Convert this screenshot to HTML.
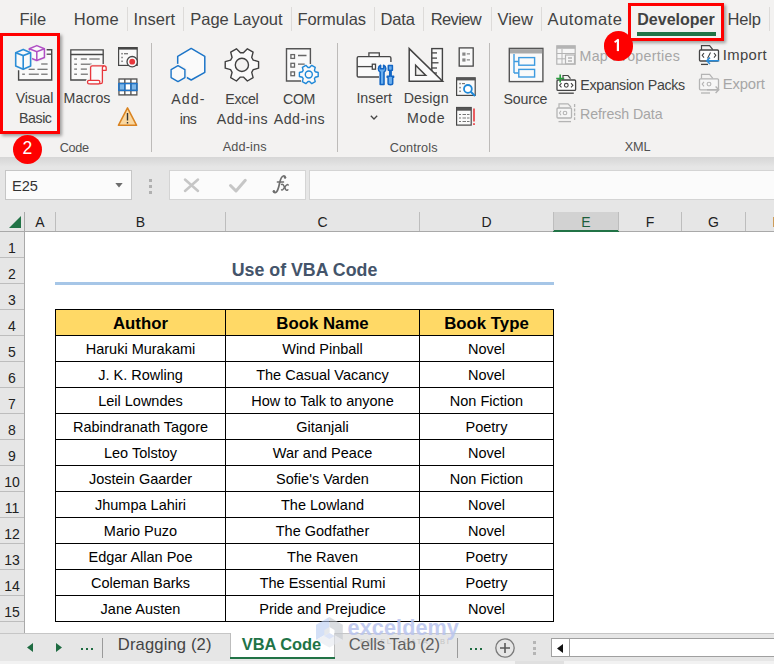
<!DOCTYPE html>
<html><head><meta charset="utf-8"><style>
html,body{margin:0;padding:0}
body{width:774px;height:664px;overflow:hidden;position:relative;background:#f3f2f1;font-family:"Liberation Sans", sans-serif}
.t{position:absolute;line-height:1;white-space:nowrap;font-family:"Liberation Sans", sans-serif}
</style></head><body>
<div class="t" style="left:19.50px;top:11.23px;font-size:16.50px;color:#424242;">File</div>
<div class="t" style="left:73.80px;top:11.23px;font-size:16.50px;color:#424242;letter-spacing:0.315px;">Home</div>
<div style="position:absolute;left:127.00px;top:7.00px;width:1.00px;height:24.00px;background:#dddbd9"></div>
<div class="t" style="left:133.50px;top:11.23px;font-size:16.50px;color:#424242;letter-spacing:0.070px;">Insert</div>
<div style="position:absolute;left:183.00px;top:7.00px;width:1.00px;height:24.00px;background:#dddbd9"></div>
<div class="t" style="left:190.30px;top:11.23px;font-size:16.50px;color:#424242;letter-spacing:-0.045px;">Page Layout</div>
<div style="position:absolute;left:291.00px;top:7.00px;width:1.00px;height:24.00px;background:#dddbd9"></div>
<div class="t" style="left:297.40px;top:11.23px;font-size:16.50px;color:#424242;letter-spacing:-0.015px;">Formulas</div>
<div style="position:absolute;left:374.00px;top:7.00px;width:1.00px;height:24.00px;background:#dddbd9"></div>
<div class="t" style="left:380.50px;top:11.23px;font-size:16.50px;color:#424242;letter-spacing:-0.133px;">Data</div>
<div style="position:absolute;left:423.00px;top:7.00px;width:1.00px;height:24.00px;background:#dddbd9"></div>
<div class="t" style="left:430.70px;top:11.23px;font-size:16.50px;color:#424242;letter-spacing:-0.624px;">Review</div>
<div style="position:absolute;left:491.00px;top:7.00px;width:1.00px;height:24.00px;background:#dddbd9"></div>
<div class="t" style="left:497.40px;top:11.23px;font-size:16.50px;color:#424242;letter-spacing:0.042px;">View</div>
<div style="position:absolute;left:541.00px;top:7.00px;width:1.00px;height:24.00px;background:#dddbd9"></div>
<div class="t" style="left:547.60px;top:11.23px;font-size:16.50px;color:#424242;letter-spacing:0.526px;">Automate</div>
<div class="t" style="left:727.60px;top:11.23px;font-size:16.50px;color:#424242;letter-spacing:-0.203px;">Help</div>
<div style="position:absolute;left:769.00px;top:7.00px;width:1.00px;height:24.00px;background:#dddbd9"></div>
<div class="t" style="left:637.30px;top:12.45px;font-size:16.00px;color:#424242;font-weight:bold;">Developer</div>
<div style="position:absolute;left:637.00px;top:32.00px;width:79.00px;height:3.50px;background:#217346"></div>
<div class="t" style="left:-265.58px;top:91.28px;font-size:14.20px;color:#424242;width:600px;text-align:center;letter-spacing:-0.162px;">Visual</div>
<div class="t" style="left:-264.73px;top:111.28px;font-size:14.20px;color:#424242;width:600px;text-align:center;letter-spacing:-0.455px;">Basic</div>
<div class="t" style="left:-212.96px;top:91.28px;font-size:14.20px;color:#424242;width:600px;text-align:center;letter-spacing:0.085px;">Macros</div>
<div class="t" style="left:-111.66px;top:91.68px;font-size:14.20px;color:#424242;width:600px;text-align:center;letter-spacing:1.079px;">Add-</div>
<div class="t" style="left:-111.92px;top:111.58px;font-size:14.20px;color:#424242;width:600px;text-align:center;letter-spacing:-0.438px;">ins</div>
<div class="t" style="left:-58.18px;top:91.68px;font-size:14.20px;color:#424242;width:600px;text-align:center;letter-spacing:-0.355px;">Excel</div>
<div class="t" style="left:-57.58px;top:111.58px;font-size:14.20px;color:#424242;width:600px;text-align:center;letter-spacing:0.444px;">Add-ins</div>
<div class="t" style="left:-1.01px;top:91.68px;font-size:14.20px;color:#424242;width:600px;text-align:center;letter-spacing:-0.428px;">COM</div>
<div class="t" style="left:-0.57px;top:111.58px;font-size:14.20px;color:#424242;width:600px;text-align:center;letter-spacing:0.460px;">Add-ins</div>
<div class="t" style="left:74.21px;top:91.38px;font-size:14.20px;color:#424242;width:600px;text-align:center;letter-spacing:0.020px;">Insert</div>
<svg style="position:absolute;left:369.50px;top:114.50px" width="8" height="5" viewBox="0 0 8 5"><path d="M0.8 0.8L4 4L7.2 0.8" fill="none" stroke="#444" stroke-width="1.3"/></svg>
<div class="t" style="left:126.18px;top:91.38px;font-size:14.20px;color:#424242;width:600px;text-align:center;letter-spacing:0.153px;">Design</div>
<div class="t" style="left:126.17px;top:111.08px;font-size:14.20px;color:#424242;width:600px;text-align:center;letter-spacing:0.733px;">Mode</div>
<div class="t" style="left:225.39px;top:91.58px;font-size:14.20px;color:#424242;width:600px;text-align:center;letter-spacing:-0.223px;">Source</div>
<div class="t" style="left:579.50px;top:49.18px;font-size:14.20px;color:#a6a6a6;letter-spacing:0.317px;">Map Properties</div>
<div class="t" style="left:580.30px;top:78.38px;font-size:14.20px;color:#424242;letter-spacing:-0.280px;">Expansion Packs</div>
<div class="t" style="left:580.00px;top:107.18px;font-size:14.20px;color:#a6a6a6;letter-spacing:-0.092px;">Refresh Data</div>
<div class="t" style="left:722.70px;top:48.37px;font-size:14.80px;color:#424242;letter-spacing:0.408px;">Import</div>
<div class="t" style="left:722.70px;top:77.47px;font-size:14.80px;color:#a6a6a6;letter-spacing:-0.114px;">Export</div>
<div class="t" style="left:-225.88px;top:141.55px;font-size:12.70px;color:#505050;width:600px;text-align:center;letter-spacing:-0.351px;">Code</div>
<div class="t" style="left:-55.32px;top:141.45px;font-size:12.70px;color:#505050;width:600px;text-align:center;letter-spacing:0.158px;">Add-ins</div>
<div class="t" style="left:113.64px;top:142.05px;font-size:12.70px;color:#505050;width:600px;text-align:center;letter-spacing:0.085px;">Controls</div>
<div class="t" style="left:337.63px;top:140.85px;font-size:12.70px;color:#505050;width:600px;text-align:center;letter-spacing:-0.149px;">XML</div>
<div style="position:absolute;left:151.00px;top:43.00px;width:1.00px;height:109.00px;background:#bdbbb9"></div>
<div style="position:absolute;left:337.00px;top:43.00px;width:1.00px;height:109.00px;background:#bdbbb9"></div>
<div style="position:absolute;left:489.00px;top:43.00px;width:1.00px;height:109.00px;background:#bdbbb9"></div>
<div style="position:absolute;left:0.00px;top:157.00px;width:774.00px;height:75.00px;background:#e6e6e6"></div>
<div style="position:absolute;left:0.00px;top:157.00px;width:774.00px;height:10.00px;background:linear-gradient(#d6d6d6,#e6e6e6)"></div>
<div style="position:absolute;left:5.00px;top:170.00px;width:127.00px;height:30.00px;background:#fbfbfb;border:1px solid #c6c6c6;box-sizing:border-box"></div>
<div class="t" style="left:12.00px;top:178.84px;font-size:14.60px;color:#333;">E25</div>
<svg style="position:absolute;left:115.00px;top:182.50px" width="8" height="5" viewBox="0 0 8 5"><path d="M0.3 0H7.7L4 4.5Z" fill="#6d6d6d"/></svg>
<div style="position:absolute;left:148.50px;top:178.50px;width:3.00px;height:3.00px;background:#b0b0b0"></div>
<div style="position:absolute;left:148.50px;top:184.50px;width:3.00px;height:3.00px;background:#b0b0b0"></div>
<div style="position:absolute;left:148.50px;top:190.50px;width:3.00px;height:3.00px;background:#b0b0b0"></div>
<div style="position:absolute;left:169.00px;top:170.00px;width:137.00px;height:30.00px;background:#fbfbfb;border:1px solid #d4d4d4;box-sizing:border-box"></div>
<div style="position:absolute;left:309.00px;top:170.00px;width:470.00px;height:30.00px;background:#fbfbfb;border:1px solid #d4d4d4;box-sizing:border-box"></div>
<div style="position:absolute;left:0.00px;top:212.00px;width:774.00px;height:19.00px;background:#e6e6e6"></div>
<div style="position:absolute;left:0.00px;top:231.00px;width:774.00px;height:1.00px;background:#a9a9a9"></div>
<div style="position:absolute;left:0.00px;top:232.00px;width:24.00px;height:402.00px;background:#e6e6e6"></div>
<div style="position:absolute;left:24.00px;top:211.50px;width:1.00px;height:422.00px;background:#a9a9a9"></div>
<div class="t" style="left:-260.00px;top:215.15px;font-size:14.00px;color:#222;width:600px;text-align:center;">A</div>
<div style="position:absolute;left:55.00px;top:212.00px;width:1.00px;height:19.00px;background:#bdbdbd"></div>
<div class="t" style="left:-159.50px;top:215.15px;font-size:14.00px;color:#222;width:600px;text-align:center;">B</div>
<div style="position:absolute;left:225.00px;top:212.00px;width:1.00px;height:19.00px;background:#bdbdbd"></div>
<div class="t" style="left:22.50px;top:215.15px;font-size:14.00px;color:#222;width:600px;text-align:center;">C</div>
<div style="position:absolute;left:419.00px;top:212.00px;width:1.00px;height:19.00px;background:#bdbdbd"></div>
<div class="t" style="left:186.50px;top:215.15px;font-size:14.00px;color:#222;width:600px;text-align:center;">D</div>
<div style="position:absolute;left:553.00px;top:212.00px;width:1.00px;height:19.00px;background:#bdbdbd"></div>
<div style="position:absolute;left:553.00px;top:212.00px;width:65.00px;height:19.00px;background:#d2d2d2"></div>
<div style="position:absolute;left:553.00px;top:230.00px;width:66.00px;height:2.00px;background:#217346"></div>
<div class="t" style="left:286.00px;top:215.15px;font-size:14.00px;color:#1d5e3b;width:600px;text-align:center;">E</div>
<div style="position:absolute;left:618.00px;top:212.00px;width:1.00px;height:19.00px;background:#bdbdbd"></div>
<div class="t" style="left:350.00px;top:215.15px;font-size:14.00px;color:#222;width:600px;text-align:center;">F</div>
<div style="position:absolute;left:681.00px;top:212.00px;width:1.00px;height:19.00px;background:#bdbdbd"></div>
<div class="t" style="left:413.50px;top:215.15px;font-size:14.00px;color:#222;width:600px;text-align:center;">G</div>
<div style="position:absolute;left:745.00px;top:212.00px;width:1.00px;height:19.00px;background:#bdbdbd"></div>
<div class="t" style="left:477.50px;top:215.15px;font-size:14.00px;color:#222;width:600px;text-align:center;">H</div>
<div style="position:absolute;left:809.00px;top:212.00px;width:1.00px;height:19.00px;background:#bdbdbd"></div>
<div style="position:absolute;left:553.00px;top:212.00px;width:1.00px;height:19.00px;background:#bdbdbd"></div>
<svg style="position:absolute;left:9.00px;top:216.00px" width="12" height="12" viewBox="0 0 12 12"><path d="M12 0V12H0Z" fill="#217346"/></svg>
<div class="t" style="left:-288.00px;top:241.15px;font-size:14.00px;color:#222;width:600px;text-align:center;">1</div>
<div style="position:absolute;left:0.00px;top:257.00px;width:24.00px;height:1.00px;background:#bdbdbd"></div>
<div class="t" style="left:-288.00px;top:267.15px;font-size:14.00px;color:#222;width:600px;text-align:center;">2</div>
<div style="position:absolute;left:0.00px;top:283.00px;width:24.00px;height:1.00px;background:#bdbdbd"></div>
<div class="t" style="left:-288.00px;top:293.15px;font-size:14.00px;color:#222;width:600px;text-align:center;">3</div>
<div style="position:absolute;left:0.00px;top:309.00px;width:24.00px;height:1.00px;background:#bdbdbd"></div>
<div class="t" style="left:-288.00px;top:319.15px;font-size:14.00px;color:#222;width:600px;text-align:center;">4</div>
<div style="position:absolute;left:0.00px;top:335.00px;width:24.00px;height:1.00px;background:#bdbdbd"></div>
<div class="t" style="left:-288.00px;top:345.15px;font-size:14.00px;color:#222;width:600px;text-align:center;">5</div>
<div style="position:absolute;left:0.00px;top:361.00px;width:24.00px;height:1.00px;background:#bdbdbd"></div>
<div class="t" style="left:-288.00px;top:371.15px;font-size:14.00px;color:#222;width:600px;text-align:center;">6</div>
<div style="position:absolute;left:0.00px;top:387.00px;width:24.00px;height:1.00px;background:#bdbdbd"></div>
<div class="t" style="left:-288.00px;top:397.15px;font-size:14.00px;color:#222;width:600px;text-align:center;">7</div>
<div style="position:absolute;left:0.00px;top:413.00px;width:24.00px;height:1.00px;background:#bdbdbd"></div>
<div class="t" style="left:-288.00px;top:423.15px;font-size:14.00px;color:#222;width:600px;text-align:center;">8</div>
<div style="position:absolute;left:0.00px;top:439.00px;width:24.00px;height:1.00px;background:#bdbdbd"></div>
<div class="t" style="left:-288.00px;top:449.15px;font-size:14.00px;color:#222;width:600px;text-align:center;">9</div>
<div style="position:absolute;left:0.00px;top:465.00px;width:24.00px;height:1.00px;background:#bdbdbd"></div>
<div class="t" style="left:-288.00px;top:475.15px;font-size:14.00px;color:#222;width:600px;text-align:center;">10</div>
<div style="position:absolute;left:0.00px;top:491.00px;width:24.00px;height:1.00px;background:#bdbdbd"></div>
<div class="t" style="left:-288.00px;top:501.15px;font-size:14.00px;color:#222;width:600px;text-align:center;">11</div>
<div style="position:absolute;left:0.00px;top:517.00px;width:24.00px;height:1.00px;background:#bdbdbd"></div>
<div class="t" style="left:-288.00px;top:527.15px;font-size:14.00px;color:#222;width:600px;text-align:center;">12</div>
<div style="position:absolute;left:0.00px;top:543.00px;width:24.00px;height:1.00px;background:#bdbdbd"></div>
<div class="t" style="left:-288.00px;top:553.15px;font-size:14.00px;color:#222;width:600px;text-align:center;">13</div>
<div style="position:absolute;left:0.00px;top:569.00px;width:24.00px;height:1.00px;background:#bdbdbd"></div>
<div class="t" style="left:-288.00px;top:579.15px;font-size:14.00px;color:#222;width:600px;text-align:center;">14</div>
<div style="position:absolute;left:0.00px;top:595.00px;width:24.00px;height:1.00px;background:#bdbdbd"></div>
<div class="t" style="left:-288.00px;top:605.15px;font-size:14.00px;color:#222;width:600px;text-align:center;">15</div>
<div style="position:absolute;left:0.00px;top:621.00px;width:24.00px;height:1.00px;background:#bdbdbd"></div>
<div style="position:absolute;left:25.00px;top:232.00px;width:774.00px;height:401.50px;background:#fff"></div>
<div class="t" style="left:4.50px;top:262.33px;font-size:17.80px;color:#44546a;font-weight:bold;width:600px;text-align:center;">Use of VBA Code</div>
<div style="position:absolute;left:55.00px;top:282.00px;width:499.00px;height:3.00px;background:#a6c6e7"></div>
<div style="position:absolute;left:55.00px;top:309.00px;width:499.00px;height:26.00px;background:#ffd966"></div>
<div class="t" style="left:-159.50px;top:315.98px;font-size:16.80px;color:#000;font-weight:bold;width:600px;text-align:center;">Author</div>
<div class="t" style="left:22.50px;top:315.98px;font-size:16.80px;color:#000;font-weight:bold;width:600px;text-align:center;">Book Name</div>
<div class="t" style="left:186.50px;top:315.98px;font-size:16.80px;color:#000;font-weight:bold;width:600px;text-align:center;">Book Type</div>
<div class="t" style="left:-159.50px;top:342.32px;font-size:14.50px;color:#000;width:600px;text-align:center;">Haruki Murakami</div>
<div class="t" style="left:22.50px;top:342.32px;font-size:14.50px;color:#000;width:600px;text-align:center;">Wind Pinball</div>
<div class="t" style="left:186.50px;top:342.32px;font-size:14.50px;color:#000;width:600px;text-align:center;">Novel</div>
<div class="t" style="left:-159.50px;top:368.32px;font-size:14.50px;color:#000;width:600px;text-align:center;">J. K. Rowling</div>
<div class="t" style="left:22.50px;top:368.32px;font-size:14.50px;color:#000;width:600px;text-align:center;">The Casual Vacancy</div>
<div class="t" style="left:186.50px;top:368.32px;font-size:14.50px;color:#000;width:600px;text-align:center;">Novel</div>
<div class="t" style="left:-159.50px;top:394.32px;font-size:14.50px;color:#000;width:600px;text-align:center;">Leil Lowndes</div>
<div class="t" style="left:22.50px;top:394.32px;font-size:14.50px;color:#000;width:600px;text-align:center;">How to Talk to anyone</div>
<div class="t" style="left:186.50px;top:394.32px;font-size:14.50px;color:#000;width:600px;text-align:center;">Non Fiction</div>
<div class="t" style="left:-159.50px;top:420.32px;font-size:14.50px;color:#000;width:600px;text-align:center;">Rabindranath Tagore</div>
<div class="t" style="left:22.50px;top:420.32px;font-size:14.50px;color:#000;width:600px;text-align:center;">Gitanjali</div>
<div class="t" style="left:186.50px;top:420.32px;font-size:14.50px;color:#000;width:600px;text-align:center;">Poetry</div>
<div class="t" style="left:-159.50px;top:446.32px;font-size:14.50px;color:#000;width:600px;text-align:center;">Leo Tolstoy</div>
<div class="t" style="left:22.50px;top:446.32px;font-size:14.50px;color:#000;width:600px;text-align:center;">War and Peace</div>
<div class="t" style="left:186.50px;top:446.32px;font-size:14.50px;color:#000;width:600px;text-align:center;">Novel</div>
<div class="t" style="left:-159.50px;top:472.32px;font-size:14.50px;color:#000;width:600px;text-align:center;">Jostein Gaarder</div>
<div class="t" style="left:22.50px;top:472.32px;font-size:14.50px;color:#000;width:600px;text-align:center;">Sofie's Varden</div>
<div class="t" style="left:186.50px;top:472.32px;font-size:14.50px;color:#000;width:600px;text-align:center;">Non Fiction</div>
<div class="t" style="left:-159.50px;top:498.32px;font-size:14.50px;color:#000;width:600px;text-align:center;">Jhumpa Lahiri</div>
<div class="t" style="left:22.50px;top:498.32px;font-size:14.50px;color:#000;width:600px;text-align:center;">The Lowland</div>
<div class="t" style="left:186.50px;top:498.32px;font-size:14.50px;color:#000;width:600px;text-align:center;">Novel</div>
<div class="t" style="left:-159.50px;top:524.32px;font-size:14.50px;color:#000;width:600px;text-align:center;">Mario Puzo</div>
<div class="t" style="left:22.50px;top:524.32px;font-size:14.50px;color:#000;width:600px;text-align:center;">The Godfather</div>
<div class="t" style="left:186.50px;top:524.32px;font-size:14.50px;color:#000;width:600px;text-align:center;">Novel</div>
<div class="t" style="left:-159.50px;top:550.32px;font-size:14.50px;color:#000;width:600px;text-align:center;">Edgar Allan Poe</div>
<div class="t" style="left:22.50px;top:550.32px;font-size:14.50px;color:#000;width:600px;text-align:center;">The Raven</div>
<div class="t" style="left:186.50px;top:550.32px;font-size:14.50px;color:#000;width:600px;text-align:center;">Poetry</div>
<div class="t" style="left:-159.50px;top:576.32px;font-size:14.50px;color:#000;width:600px;text-align:center;">Coleman Barks</div>
<div class="t" style="left:22.50px;top:576.32px;font-size:14.50px;color:#000;width:600px;text-align:center;">The Essential Rumi</div>
<div class="t" style="left:186.50px;top:576.32px;font-size:14.50px;color:#000;width:600px;text-align:center;">Poetry</div>
<div class="t" style="left:-159.50px;top:602.32px;font-size:14.50px;color:#000;width:600px;text-align:center;">Jane Austen</div>
<div class="t" style="left:22.50px;top:602.32px;font-size:14.50px;color:#000;width:600px;text-align:center;">Pride and Prejudice</div>
<div class="t" style="left:186.50px;top:602.32px;font-size:14.50px;color:#000;width:600px;text-align:center;">Novel</div>
<div style="position:absolute;left:55.00px;top:309.00px;width:499.00px;height:1.00px;background:#000"></div>
<div style="position:absolute;left:55.00px;top:335.00px;width:499.00px;height:1.00px;background:#000"></div>
<div style="position:absolute;left:55.00px;top:361.00px;width:499.00px;height:1.00px;background:#000"></div>
<div style="position:absolute;left:55.00px;top:387.00px;width:499.00px;height:1.00px;background:#000"></div>
<div style="position:absolute;left:55.00px;top:413.00px;width:499.00px;height:1.00px;background:#000"></div>
<div style="position:absolute;left:55.00px;top:439.00px;width:499.00px;height:1.00px;background:#000"></div>
<div style="position:absolute;left:55.00px;top:465.00px;width:499.00px;height:1.00px;background:#000"></div>
<div style="position:absolute;left:55.00px;top:491.00px;width:499.00px;height:1.00px;background:#000"></div>
<div style="position:absolute;left:55.00px;top:517.00px;width:499.00px;height:1.00px;background:#000"></div>
<div style="position:absolute;left:55.00px;top:543.00px;width:499.00px;height:1.00px;background:#000"></div>
<div style="position:absolute;left:55.00px;top:569.00px;width:499.00px;height:1.00px;background:#000"></div>
<div style="position:absolute;left:55.00px;top:595.00px;width:499.00px;height:1.00px;background:#000"></div>
<div style="position:absolute;left:55.00px;top:621.00px;width:499.00px;height:1.00px;background:#000"></div>
<div style="position:absolute;left:55.00px;top:309.00px;width:1.00px;height:313.00px;background:#000"></div>
<div style="position:absolute;left:225.00px;top:309.00px;width:1.00px;height:313.00px;background:#000"></div>
<div style="position:absolute;left:419.00px;top:309.00px;width:1.00px;height:313.00px;background:#000"></div>
<div style="position:absolute;left:553.00px;top:309.00px;width:1.00px;height:313.00px;background:#000"></div>
<div style="position:absolute;left:0.00px;top:633.00px;width:774.00px;height:31.00px;background:#e6e6e6"></div>
<div style="position:absolute;left:0.00px;top:633.00px;width:774.00px;height:1.00px;background:#c6c6c6"></div>
<svg style="position:absolute;left:26.50px;top:643.00px" width="6" height="9" viewBox="0 0 6 9"><path d="M6 0V9L0 4.5Z" fill="#1e6b41"/></svg>
<svg style="position:absolute;left:56.00px;top:643.00px" width="6" height="9" viewBox="0 0 6 9"><path d="M0 0V9L6 4.5Z" fill="#1e6b41"/></svg>
<div style="position:absolute;left:81.00px;top:648.00px;width:2.00px;height:2.00px;background:#1e6b41"></div>
<div style="position:absolute;left:86.00px;top:648.00px;width:2.00px;height:2.00px;background:#1e6b41"></div>
<div style="position:absolute;left:91.00px;top:648.00px;width:2.00px;height:2.00px;background:#1e6b41"></div>
<div style="position:absolute;left:102.00px;top:638.00px;width:1.00px;height:20.00px;background:#9a9a9a"></div>
<div class="t" style="left:117.80px;top:636.84px;font-size:16.60px;color:#444;letter-spacing:0.128px;">Dragging (2)</div>
<div style="position:absolute;left:230.00px;top:633.00px;width:105.00px;height:26.00px;background:#fff;border-left:1px solid #bdbdbd;border-right:1px solid #bdbdbd;box-sizing:border-box"></div>
<div style="position:absolute;left:230.00px;top:657.00px;width:105.00px;height:2.00px;background:#217346"></div>
<div class="t" style="left:241.80px;top:636.31px;font-size:16.40px;color:#217346;font-weight:bold;letter-spacing:-0.020px;">VBA Code</div>
<div class="t" style="left:348.80px;top:636.84px;font-size:16.60px;color:#5e5e5e;letter-spacing:-0.140px;">Cells Tab (2)</div>
<div style="position:absolute;left:457.00px;top:638.00px;width:1.00px;height:20.00px;background:#9a9a9a"></div>
<div style="position:absolute;left:470.00px;top:648.00px;width:2.00px;height:2.00px;background:#1e6b41"></div>
<div style="position:absolute;left:475.00px;top:648.00px;width:2.00px;height:2.00px;background:#1e6b41"></div>
<div style="position:absolute;left:480.00px;top:648.00px;width:2.00px;height:2.00px;background:#1e6b41"></div>
<svg style="position:absolute;left:495.00px;top:638.00px" width="20" height="20" viewBox="0 0 20 20"><circle cx="10" cy="10" r="9.2" fill="none" stroke="#7a7a7a" stroke-width="1.3"/><path d="M10 5V15M5 10H15" stroke="#5a5a5a" stroke-width="1.6"/></svg>
<div style="position:absolute;left:533.00px;top:641.00px;width:3.00px;height:3.00px;background:#b5b5b5"></div>
<div style="position:absolute;left:533.00px;top:646.50px;width:3.00px;height:3.00px;background:#b5b5b5"></div>
<div style="position:absolute;left:533.00px;top:652.00px;width:3.00px;height:3.00px;background:#b5b5b5"></div>
<div style="position:absolute;left:551.00px;top:638.00px;width:230.00px;height:19.00px;background:#fff;border:1px solid #a0a0a0;box-sizing:border-box"></div>
<div style="position:absolute;left:569.00px;top:638.00px;width:1.00px;height:19.00px;background:#a0a0a0"></div>
<svg style="position:absolute;left:556.50px;top:643.50px" width="6" height="9" viewBox="0 0 6 9"><path d="M6 0V9L0 4.5Z" fill="#111"/></svg>
<div style="position:absolute;left:0.00px;top:661.00px;width:774.00px;height:3.00px;background:#f2f2f2"></div>
<div style="position:absolute;left:515.00px;top:661.00px;width:49.00px;height:3.00px;background:#e0e0e0"></div>
<svg style="position:absolute;left:0;top:0" width="774" height="664" viewBox="0 0 774 664"><path d="M18.6 49.7H51.7V80H18.6Z" fill="#fafafa"/><path d="M46.4 49.7H51.7V80H18.6V70.2" fill="none" stroke="#474747" stroke-width="1.4"/><path d="M46.4 54.2H51.7" stroke="#474747" stroke-width="1.3"/><path d="M41.2 64H47.6" stroke="#6a6a6a" stroke-width="1.2"/><path d="M28.6 69.3H34.7" stroke="#6a6a6a" stroke-width="1.2"/><path d="M37.4 69.3H47.6" stroke="#6a6a6a" stroke-width="1.2"/><path d="M22.2 74.2H24.9" stroke="#6a6a6a" stroke-width="1.2"/><path d="M28.8 74.2H38.8" stroke="#6a6a6a" stroke-width="1.2"/><path d="M41.2 74.2H47.6" stroke="#6a6a6a" stroke-width="1.2"/><polygon points="36.8,45.6 44.4,48.7 44.4,57.5 36.8,60.5 29.3,57.5 29.3,48.7" fill="#f3f2f1" stroke="#f3f2f1" stroke-width="4" stroke-linejoin="round"/><polygon points="36.8,45.6 44.4,48.7 44.4,57.5 36.8,60.5 29.3,57.5 29.3,48.7" fill="#fafafa" stroke="#b04fc4" stroke-width="1.5" stroke-linejoin="round"/><path d="M29.3 48.7L36.8 51.6L44.4 48.7M36.8 51.6V60.5" fill="none" stroke="#b04fc4" stroke-width="1.5"/><polygon points="23.2,49.4 30.6,52.7 30.6,65.9 23.2,69.2 15.7,65.9 15.7,52.7" fill="#f3f2f1" stroke="#f3f2f1" stroke-width="3" stroke-linejoin="round"/><polygon points="23.2,49.4 30.6,52.7 30.6,65.9 23.2,69.2 15.7,65.9 15.7,52.7" fill="#fafafa" stroke="#2b8dd6" stroke-width="1.6" stroke-linejoin="round"/><path d="M15.7 52.7L23.2 55.6L30.6 52.7M23.2 55.6V69.2" fill="none" stroke="#2b8dd6" stroke-width="1.6"/><path d="M70.8 49.8H103.2V80H70.8Z" fill="#fafafa" stroke="#474747" stroke-width="1.3"/><path d="M70.8 54.5H103.2" stroke="#474747" stroke-width="1.3"/><path d="M74.2 59H77" stroke="#6a6a6a" stroke-width="1.2"/><path d="M80.8 59H86.9" stroke="#6a6a6a" stroke-width="1.2"/><path d="M89.3 59H99.7" stroke="#6a6a6a" stroke-width="1.2"/><path d="M74.2 64.2H77" stroke="#6a6a6a" stroke-width="1.2"/><path d="M80.8 64.2H91.7" stroke="#6a6a6a" stroke-width="1.2"/><path d="M74.2 69.1H77" stroke="#6a6a6a" stroke-width="1.2"/><path d="M80.8 69.1H86.9" stroke="#6a6a6a" stroke-width="1.2"/><path d="M74.2 74.2H77" stroke="#6a6a6a" stroke-width="1.2"/><path d="M80.8 74.2H87.9" stroke="#6a6a6a" stroke-width="1.2"/><path d="M90.6 83.7V67.6Q90.6 65.9 92.3 65.9H104.3Q106.2 65.9 106.2 68.1V70.3H102.4V82Q102.4 83.7 100.7 83.7Z" fill="#f3f2f1" stroke="#f3f2f1" stroke-width="3.6" stroke-linejoin="round"/><rect x="87.6" y="80.3" width="12.2" height="3.6" rx="1.3" fill="#f3f2f1" stroke="#f3f2f1" stroke-width="3.6"/><path d="M90.6 83.7V67.6Q90.6 65.9 92.3 65.9H104.3Q106.2 65.9 106.2 68.1V70.3H102.4V82Q102.4 83.7 100.7 83.7Z" fill="#fafafa" stroke="#e8373c" stroke-width="1.3" stroke-linejoin="round"/><path d="M102.4 70.3V68.1Q102.4 65.9 104.3 65.9" fill="none" stroke="#e8373c" stroke-width="1.3"/><rect x="87.6" y="80.3" width="12.2" height="3.6" rx="1.3" fill="#fafafa" stroke="#e8373c" stroke-width="1.3"/><rect x="118.6" y="47.6" width="18.6" height="17.8" fill="#fafafa" stroke="#474747" stroke-width="1.2"/><rect x="118.6" y="47.6" width="18.6" height="2" fill="#474747"/><rect x="121.3" y="52.95" width="1.5" height="1.5" fill="#777"/><rect x="121.3" y="56.75" width="1.5" height="1.5" fill="#777"/><rect x="121.3" y="60.55" width="1.5" height="1.5" fill="#777"/><path d="M124 53.7H128" stroke="#777" stroke-width="1.3"/><circle cx="132.2" cy="61.7" r="5.2" fill="#fafafa" stroke="#474747" stroke-width="1.3"/><circle cx="132.2" cy="61.7" r="2.9" fill="#e8373c"/><rect x="118.3" y="78.3" width="19.2" height="17.3" fill="#555"/><rect x="119.6" y="79.7" width="4.5" height="2.9" fill="#fff"/><rect x="119.6" y="84" width="4.5" height="5.8" fill="#7cb7ea"/><rect x="119.6" y="91.2" width="4.5" height="3" fill="#fff"/><rect x="125.5" y="79.7" width="4.7" height="2.9" fill="#fff"/><rect x="125.5" y="84" width="4.7" height="5.8" fill="#fff"/><rect x="125.5" y="91.2" width="4.7" height="3" fill="#fff"/><rect x="131.6" y="79.7" width="4.6" height="2.9" fill="#fff"/><rect x="131.6" y="84" width="4.6" height="5.8" fill="#7cb7ea"/><rect x="131.6" y="91.2" width="4.6" height="3" fill="#fff"/><rect x="118.8" y="83.6" width="18.2" height="6.8" fill="none" stroke="#1f74c9" stroke-width="1.4"/><path d="M124.8 83.6V90.4M130.9 83.6V90.4" stroke="#1f74c9" stroke-width="1.4"/><path d="M127.5 107.8L136.6 125.3H118.4Z" fill="#f9d7a0" stroke="#d98320" stroke-width="1.5" stroke-linejoin="round"/><path d="M127.5 113V120.5" stroke="#333" stroke-width="1.4"/><rect x="126.8" y="122" width="1.4" height="1.5" fill="#333"/><polygon points="191.2,48.4 204.8,56.3 204.8,72.3 191.2,80 177.7,72.3 177.7,56.3" fill="#fafafa" stroke="#1c75c8" stroke-width="1.5" stroke-linejoin="round"/><polygon points="178,65.7 184.9,69.7 184.9,77.6 178,81.6 171.1,77.6 171.1,69.7" fill="#fafafa" stroke="#f3f2f1" stroke-width="4" stroke-linejoin="round"/><polygon points="178,65.7 184.9,69.7 184.9,77.6 178,81.6 171.1,77.6 171.1,69.7" fill="#fafafa" stroke="#1c75c8" stroke-width="1.4" stroke-linejoin="round"/><path d="M253.22 60.10L258.58 61.60L258.58 68.20L253.22 69.70L251.72 72.31L253.10 77.69L247.38 80.99L243.41 77.11L240.39 77.11L236.42 80.99L230.70 77.69L232.08 72.31L230.58 69.70L225.22 68.20L225.22 61.60L230.58 60.10L232.08 57.49L230.70 52.11L236.42 48.81L240.39 52.69L243.41 52.69L247.38 48.81L253.10 52.11L251.72 57.49Z" fill="#fafafa" stroke="#404040" stroke-width="1.4" stroke-linejoin="round"/><circle cx="241.9" cy="64.9" r="6.6" fill="#f3f2f1" stroke="#404040" stroke-width="1.4"/><path d="M301 81H286.5V48.8H310.4V64" fill="#fafafa" stroke="#555" stroke-width="1.4"/><rect x="290.9" y="54.6" width="3.6" height="3.8" fill="#fff" stroke="#666" stroke-width="1.3"/><rect x="290.9" y="63.3" width="3.6" height="3.8" fill="#fff" stroke="#666" stroke-width="1.3"/><rect x="290.9" y="71.9" width="3.6" height="3.8" fill="#fff" stroke="#666" stroke-width="1.3"/><path d="M298 55.5H306.5M298 64.2H304.7" stroke="#666" stroke-width="1.3"/><path d="M315.22 71.70L318.19 72.50L318.19 76.50L315.22 77.30L314.43 78.66L315.23 81.63L311.76 83.63L309.58 81.46L308.02 81.46L305.84 83.63L302.37 81.63L303.17 78.66L302.38 77.30L299.41 76.50L299.41 72.50L302.38 71.70L303.17 70.34L302.37 67.37L305.84 65.37L308.02 67.54L309.58 67.54L311.76 65.37L315.23 67.37L314.43 70.34Z" fill="#fafafa" stroke="#1e88d8" stroke-width="1.4" stroke-linejoin="round"/><circle cx="308.8" cy="74.5" r="3.5" fill="none" stroke="#1e88d8" stroke-width="1.4"/><rect x="368.9" y="52.9" width="10.4" height="4" fill="#fafafa" stroke="#474747" stroke-width="1.3"/><path d="M379 77H358.5Q357.2 77 357.2 75.7V58Q357.2 56.6 358.5 56.6H389.5Q390.9 56.6 390.9 58V62" fill="#fafafa" stroke="#474747" stroke-width="1.4"/><path d="M357.2 66.6H372" stroke="#474747" stroke-width="1.3"/><rect x="372.3" y="64.2" width="3.2" height="5" fill="#fff" stroke="#474747" stroke-width="1.3"/><path d="M380.2 84.5V72.2A4 4 0 0 1 380.6 65.3V68.8H383.6V65.3A4 4 0 0 1 384 72.2V84.5Z" fill="#6aaeee" stroke="#1366c4" stroke-width="1.6" stroke-linejoin="round"/><path d="M388.3 65.6H392.4V70.2H391.1V76.2H393.6V77.2L392.7 77.6V83.6Q392.7 84.8 390.4 84.8Q388.1 84.8 388.1 83.6V77.6L387.2 77.2V76.2H389.7V70.2H388.3Z" fill="#6aaeee" stroke="#1366c4" stroke-width="1.5" stroke-linejoin="round"/><path d="M390.4 70.5V76" stroke="#1366c4" stroke-width="1.8"/><rect x="431.8" y="48.6" width="10.6" height="32.6" fill="#fafafa" stroke="#444" stroke-width="1.4"/><path d="M431.8 52.9H437" stroke="#444" stroke-width="1.3"/><path d="M431.8 58.1H437" stroke="#444" stroke-width="1.3"/><path d="M431.8 62.8H438.5" stroke="#444" stroke-width="1.3"/><path d="M431.8 68H437" stroke="#444" stroke-width="1.3"/><path d="M431.8 73H437" stroke="#444" stroke-width="1.3"/><path d="M409.2 48.6V81.2H442.6Z" fill="#fafafa" stroke="#444" stroke-width="1.5" stroke-linejoin="miter"/><path d="M415.6 65.2V75.4H425.8Z" fill="#f3f2f1" stroke="#444" stroke-width="1.4"/><rect x="459.2" y="47.9" width="14" height="18.2" fill="#fafafa" stroke="#474747" stroke-width="1.3"/><rect x="462.3" y="52.5" width="3.2" height="3.2" fill="#888"/><rect x="462.3" y="58.4" width="3.2" height="3.2" fill="#888"/><path d="M466.8 53.9H470M466.8 59.9H470" stroke="#888" stroke-width="1.2"/><rect x="456.6" y="77.8" width="18.6" height="17.6" fill="#fafafa" stroke="#474747" stroke-width="1.2"/><rect x="456.6" y="77.8" width="18.6" height="2.6" fill="#555"/><rect x="459.3" y="82.85" width="1.5" height="1.5" fill="#777"/><rect x="459.3" y="86.85" width="1.5" height="1.5" fill="#777"/><rect x="459.3" y="90.55" width="1.5" height="1.5" fill="#777"/><path d="M462 83.6H465" stroke="#777" stroke-width="1.2"/><circle cx="467.9" cy="88.9" r="3.9" fill="#fff" stroke="#1e88d8" stroke-width="1.8"/><path d="M470.8 91.8L475 96" stroke="#1e88d8" stroke-width="2"/><rect x="456.6" y="107.5" width="14.6" height="17.6" fill="#fafafa" stroke="#474747" stroke-width="1.2"/><rect x="456.6" y="107.5" width="14.6" height="3.2" fill="#555"/><path d="M459 114.5H461M462.5 114.5H466M467 114.5H469.5" stroke="#777" stroke-width="1.2"/><path d="M459 118H461M462.5 118H466M467 118H469.5" stroke="#777" stroke-width="1.2"/><path d="M459 121.5H461M462.5 121.5H466M467 121.5H469.5" stroke="#777" stroke-width="1.2"/><path d="M474 108.5V121.5" stroke="#e8373c" stroke-width="1.6"/><rect x="473.2" y="123.2" width="1.6" height="1.8" fill="#e8373c"/><rect x="509.3" y="48.4" width="33.6" height="33.2" fill="#fafafa" stroke="#555" stroke-width="1.4"/><rect x="510" y="49.1" width="32.2" height="4.4" fill="#a9a9a9"/><path d="M514 54V73M514 61.5H518.5M514 73H518.5" fill="none" stroke="#3d9be0" stroke-width="1.4"/><rect x="518.8" y="57.6" width="15.8" height="7.6" fill="none" stroke="#3d9be0" stroke-width="1.4"/><rect x="518.8" y="69.4" width="15.8" height="7.6" fill="none" stroke="#3d9be0" stroke-width="1.4"/><rect x="556.8" y="45.8" width="18.4" height="18.4" fill="#f6f6f6" stroke="#b4b4b4" stroke-width="1.2"/><rect x="556.8" y="45.8" width="18.4" height="3" fill="#b4b4b4"/><path d="M556.8 53.5H575.2M556.8 58.8H566M562 49V64.2" stroke="#b4b4b4" stroke-width="1"/><rect x="565.5" y="55" width="9" height="8.8" fill="#f6f6f6" stroke="#b4b4b4" stroke-width="1.2"/><path d="M568 58H572M568 61H572" stroke="#b4b4b4" stroke-width="1.6"/><path d="M563 80V75.5H568L570.5 78.6" fill="none" stroke="#444" stroke-width="1.2"/><rect x="557" y="80" width="18.6" height="10.4" rx="1" fill="#fff" stroke="#444" stroke-width="1.3"/><path d="M558.5 93.2H573.8" stroke="#444" stroke-width="1.3"/><path d="M561.5 83.2L559.6 85.3L561.5 87.4M571 83.2L572.9 85.3L571 87.4" fill="none" stroke="#444" stroke-width="1.1"/><circle cx="566.3" cy="85.3" r="1.9" fill="none" stroke="#444" stroke-width="1.1"/><path d="M560.2 74.5V82.5M556.2 78.5H564.2" stroke="#2a9d3f" stroke-width="1.6"/><path d="M559 107.8V103.8H568L571 107" fill="none" stroke="#b4b4b4" stroke-width="1.2"/><rect x="557" y="108" width="14.5" height="10" rx="1" fill="#f6f6f6" stroke="#b4b4b4" stroke-width="1.3"/><path d="M558.5 121.6H571" stroke="#b4b4b4" stroke-width="1.3"/><path d="M574.6 104V120" stroke="#b4b4b4" stroke-width="1.3" stroke-dasharray="3 1.4"/><path d="M561 110.8L559.5 113L561 115.2" fill="none" stroke="#b4b4b4" stroke-width="1.1"/><circle cx="565" cy="113" r="1.8" fill="none" stroke="#b4b4b4" stroke-width="1.1"/><path d="M701.5 50V45.6H709.6L712.8 49.6" fill="none" stroke="#444" stroke-width="1.2"/><rect x="699.5" y="50" width="19" height="11" rx="1" fill="#fff" stroke="#444" stroke-width="1.3"/><path d="M701 64.4H708" stroke="#444" stroke-width="1.3"/><path d="M704 53L702.2 55.3L704 57.6M714 53L715.8 55.3L714 57.6M710.5 52.4L707.5 58.5" fill="none" stroke="#444" stroke-width="1.1"/><path d="M719.3 60.8H707M710 57.6L706.8 60.8L710 64" fill="none" stroke="#2a8ddb" stroke-width="1.5"/><path d="M701.5 78.8V74.4H709.6L712.8 78.4" fill="none" stroke="#b4b4b4" stroke-width="1.2"/><rect x="699.5" y="78.8" width="19" height="11" rx="1" fill="#f6f6f6" stroke="#b4b4b4" stroke-width="1.3"/><path d="M701 93H710" stroke="#b4b4b4" stroke-width="1.3"/><path d="M704 81.8L702.2 84.1L704 86.4" fill="none" stroke="#b4b4b4" stroke-width="1.1"/><circle cx="709" cy="84.1" r="1.9" fill="none" stroke="#b4b4b4" stroke-width="1.1"/><path d="M707 89.8H718.8M715.6 86.6L718.8 89.8L715.6 93" fill="none" stroke="#b4b4b4" stroke-width="1.4"/><path d="M185 179.5L198 191M198 179.5L185 191" stroke="#c6c6c6" stroke-width="2.5" stroke-linecap="round"/><path d="M230.5 185.5L236 191L245.3 180.3" fill="none" stroke="#c6c6c6" stroke-width="3" stroke-linecap="round" stroke-linejoin="round"/></svg>
<svg style="position:absolute;left:260.00px;top:168.00px" width="50" height="34" viewBox="260 168 50 34"><g fill="none" stroke="#6e6e6e" stroke-linecap="round"><path d="M273.6 191.8Q275 193.2 276.6 191.8Q278.2 190 279.6 183Q281 176.6 283.4 176Q285 175.8 285.4 177.4" stroke-width="1.7"/><path d="M277.3 182H283.6" stroke-width="1.3"/><path d="M281.6 184.4Q283.2 183.8 284.2 186.4L285.6 189.4Q286.4 190.8 287.8 189.8" stroke-width="1.5"/><path d="M288.2 185Q287.2 184 285.9 185.6L283.4 189Q282.6 190.4 281.6 189.9" stroke-width="1.5"/></g><circle cx="273.9" cy="191.3" r="1.2" fill="#6e6e6e"/><circle cx="285" cy="177.6" r="1.2" fill="#6e6e6e"/></svg>
<svg style="position:absolute;left:0;top:0;opacity:.6" width="774" height="664" viewBox="0 0 774 664"><path d="M329.4 617L316 624.8V640L329.4 632.2Z" fill="#b9ccf3"/><path d="M329.4 617L342.8 624.8V640L329.4 632.2Z" fill="#c3c7ce"/><path d="M316 640L329.4 632.2L342.8 640L329.4 647.5Z" fill="#e6e9ef"/><path d="M329.4 627L334.5 630V636L329.4 633Z" fill="#ffffff"/><path d="M324.3 630L329.4 627V633L324.3 636Z" fill="#d5d9e0"/><path d="M324.3 636L329.4 633L334.5 636L329.4 639Z" fill="#c5d3f3"/></svg>
<div class="t" style="left:347.6px;top:616.62px;font-size:21.6px;letter-spacing:0.1px;font-weight:bold;color:#b9c4ee;opacity:.85">exceldemy</div>
<div class="t" style="left:360px;top:638px;font-size:7.5px;letter-spacing:1.6px;color:#9a9a9a;opacity:.45">EXCEL · DATA · BI</div>
<div style="position:absolute;left:0.00px;top:32.50px;width:60.00px;height:101.00px;border:3px solid #ff0000;box-sizing:border-box;box-shadow:2px 2px 3px rgba(0,0,0,.35)"></div>
<div style="position:absolute;left:628.00px;top:2.50px;width:95.50px;height:38.50px;border:3px solid #ff0000;box-sizing:border-box;box-shadow:2px 2px 3px rgba(0,0,0,.35)"></div>
<div style="position:absolute;left:12.65px;top:134.75px;width:29.5px;height:29.5px;border-radius:50%;background:#fe0000"></div>
<div class="t" style="left:-272.60px;top:140.28px;font-size:17.50px;color:#fff;width:600px;text-align:center;">2</div>
<div style="position:absolute;left:603.55px;top:31.25px;width:29.5px;height:29.5px;border-radius:50%;background:#fe0000"></div>
<svg style="position:absolute;left:600.00px;top:28.00px" width="40" height="40" viewBox="600 28 40 40"><path d="M617.9 39.4V51.1" stroke="#fff" stroke-width="2.2"/><path d="M618.6 39.4L614.6 42.2" stroke="#fff" stroke-width="1.8"/></svg>
</body></html>
